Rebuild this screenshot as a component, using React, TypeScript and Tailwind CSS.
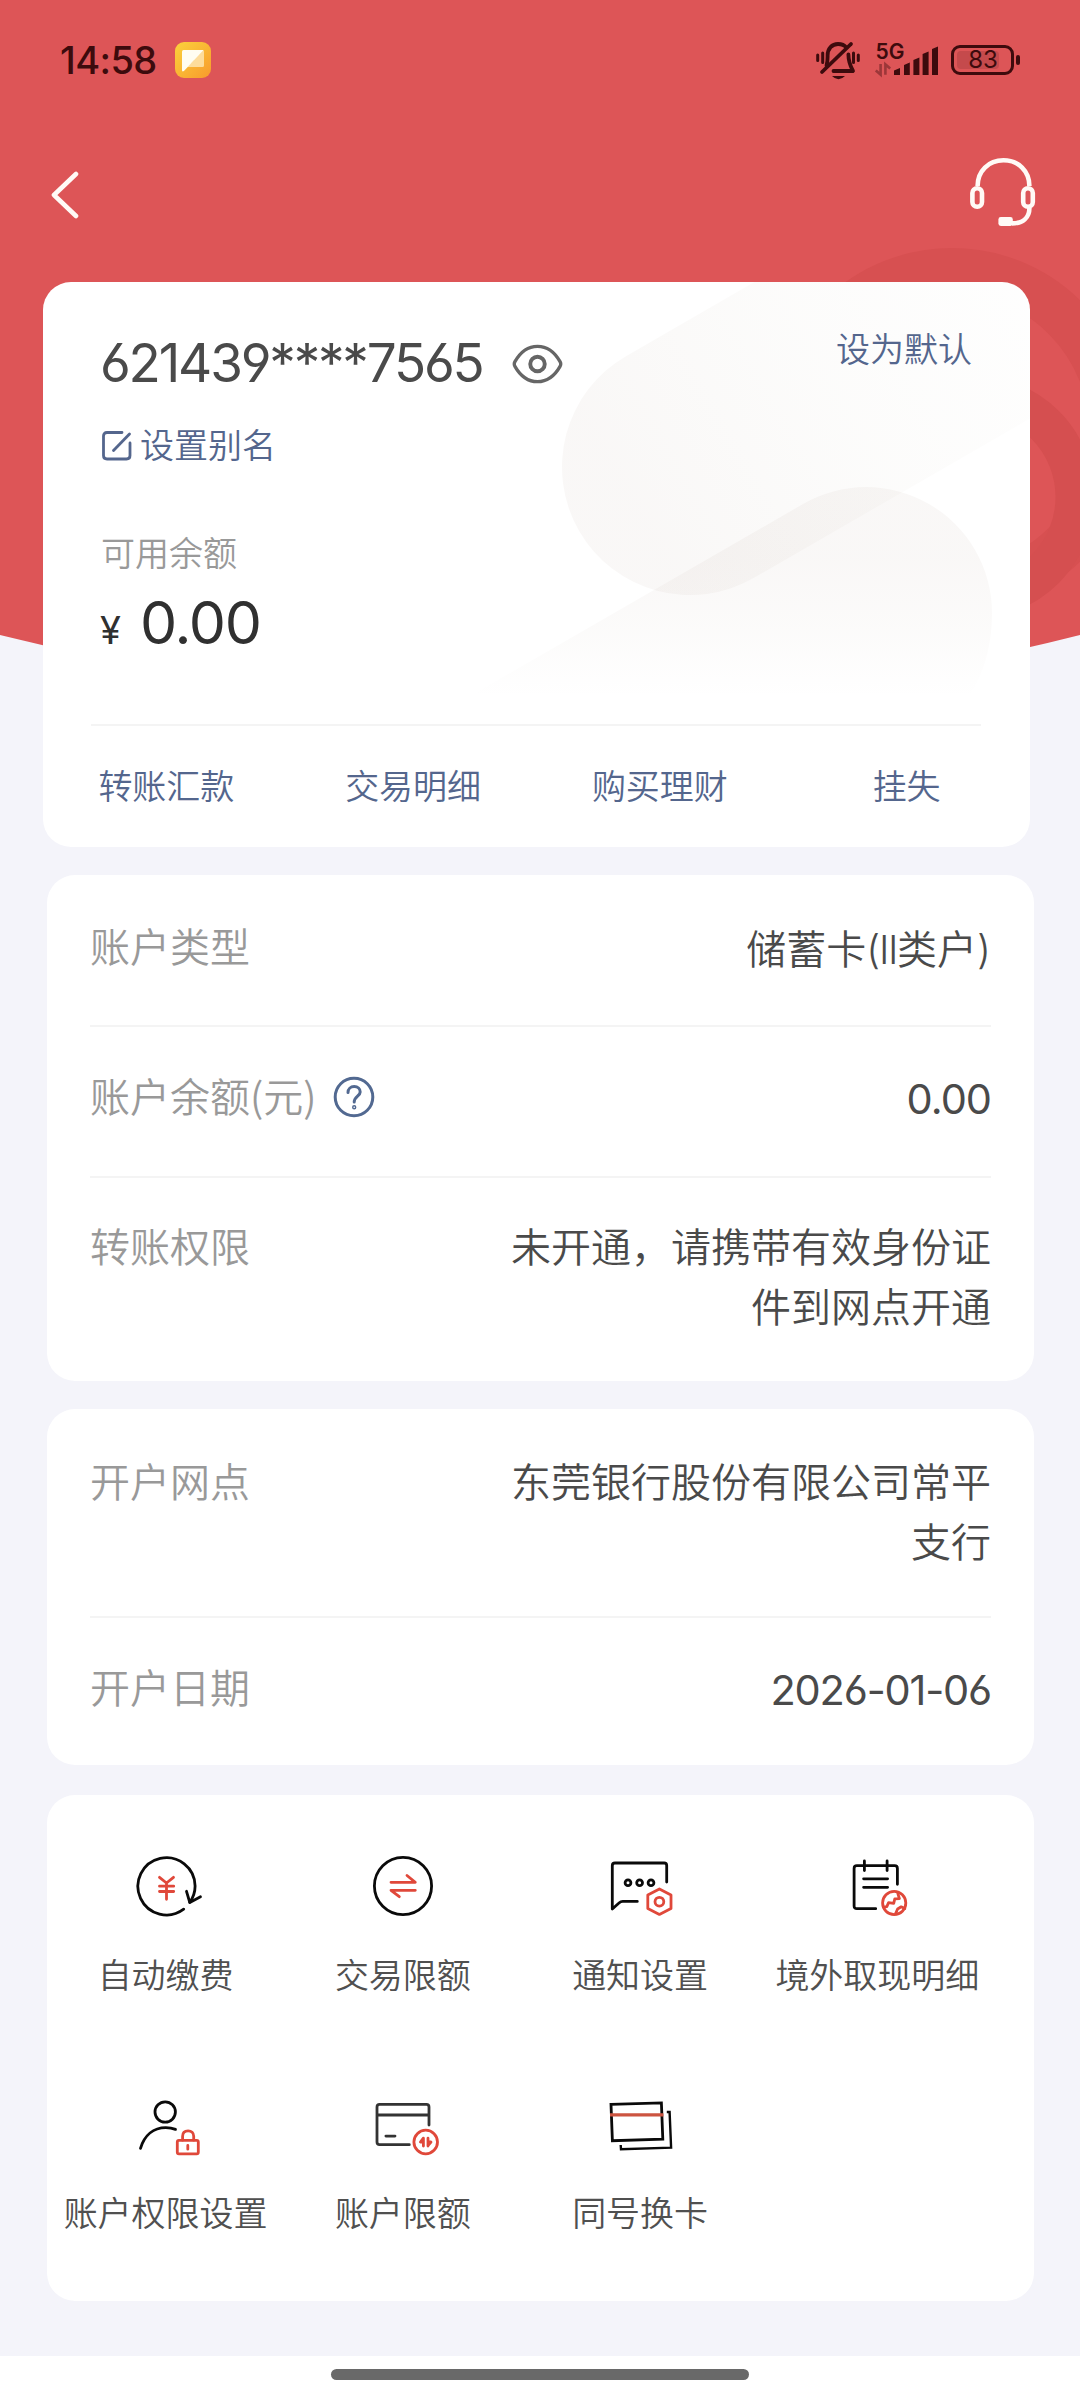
import React from "react";

const RED = "#e0483a";

// Shared frame for the 80x80 service icons
const IconBox = ({
  children,
  stroke = "#0a0a0a",
}: {
  children: React.ReactNode;
  stroke?: string;
}) => (
  <svg
    className="h-20 w-20"
    viewBox="0 0 80 80"
    fill="none"
    stroke={stroke}
    strokeWidth="2.8"
    strokeLinecap="round"
    strokeLinejoin="round"
  >
    {children}
  </svg>
);

const AutoPayIcon = () => (
  <IconBox>
    <path d="M57.7 63.2A28.6 28.6 0 1 1 69.1 40C69.1 46 67.4 51.2 63.8 56.3" />
    <path d="M60.5 45.3L63.8 56.5L74.5 50.8" />
    <g stroke={RED}>
      <path d="M33.5 31.3L40.5 37L47.5 31.3M40.5 37V53.3M33.5 40.2H47.7M33.5 45.5H47.7" />
    </g>
  </IconBox>
);

const TradeLimitIcon = () => (
  <IconBox>
    <circle cx="40" cy="40" r="28.6" />
    <g stroke={RED}>
      <path d="M28 36.3H52.3L44 29.5" />
      <path d="M52.3 44.3H28L36.3 50.7" />
    </g>
  </IconBox>
);

const NoticeIcon = () => (
  <IconBox>
    <path d="M66.7 36V19.5C66.7 18 65.8 17 64.2 17H15C13.3 17 12.3 18 12.3 19.7V63L19 57C20.2 55.9 21.2 55.4 22.8 55.4H37.3" />
    <circle cx="28" cy="36.8" r="2.9" />
    <circle cx="39.6" cy="36.8" r="2.9" />
    <circle cx="51" cy="36.8" r="2.9" />
    <g stroke={RED}>
      <path d="M59.4 43L71 49V62.4L59.4 68.4L47.8 62.4V49Z" />
      <circle cx="59.4" cy="55.7" r="4.4" />
    </g>
  </IconBox>
);

const OverseasIcon = () => (
  <IconBox>
    <g transform="translate(1.4 0)">
      <path d="M37.3 62.7H18.5C16.7 62.7 15.7 61.7 15.7 59.9V22.5C15.7 20.7 16.7 19.7 18.5 19.7H56.2C58 19.7 59 20.7 59 22.5V38.3" />
      <path d="M26 15V24.5M48.7 15V24.5M25.2 32.8H49.2M25.2 41.3H49.2" />
      <g stroke={RED}>
        <circle cx="55.8" cy="57" r="11.6" />
        <path d="M45.4 61.2L48.4 60.6L50.2 56.6L55.3 57.4L56.4 52.8L61 52.6L59.4 47.4" />
        <path d="M57.2 67.6L59.2 63L62.8 60.8L66.4 62.6" />
      </g>
    </g>
  </IconBox>
);

const PermissionIcon = () => (
  <IconBox>
    <circle cx="39.2" cy="28" r="10.2" />
    <path d="M14.5 64.3C18.5 51.5 27.5 43.7 39.8 43.7C43.2 43.7 46.4 44.2 49.5 45.4" />
    <g stroke={RED}>
      <rect x="51.3" y="56.4" width="21" height="13.4" rx="1.6" />
      <path d="M56.6 56.2V52.2C56.6 48.8 58.8 46.8 62.1 46.8C65.4 46.8 67.7 48.8 67.7 52.2V56.2M61.8 61.4V65.2" />
    </g>
  </IconBox>
);

const AccountLimitIcon = () => (
  <IconBox stroke="#333333">
    <path d="M46.3 60.7H16.6C14.9 60.7 14 59.8 14 58.1V23C14 21.3 14.9 20.4 16.6 20.4H63.4C65.1 20.4 66 21.3 66 23V41M14 31H66M22.9 52.1H32" />
    <g stroke={RED}>
      <circle cx="62.7" cy="58" r="11.8" />
      <path d="M60.4 54.2V62M60 54.6L57.4 58H60.2M65 54.2V62M65.2 61.4L68 58H65.2" />
    </g>
  </IconBox>
);

const ChangeCardIcon = () => (
  <svg
    className="h-20 w-20"
    viewBox="0 0 80 80"
    fill="none"
    stroke="#0a0a0a"
    strokeWidth="2.8"
  >
    <path d="M11 20.3L61.4 18.9L62.8 55.2L12.4 56.7Z" />
    <path d="M66.8 28H69.6L71.1 63.6L21 65.2L20.7 61" strokeWidth="2.4" />
    <path d="M10 30.8H63.4" stroke="#cc5440" strokeWidth="3.2" />
  </svg>
);

const services = [
  { label: "自动缴费", icon: <AutoPayIcon /> },
  { label: "交易限额", icon: <TradeLimitIcon /> },
  { label: "通知设置", icon: <NoticeIcon /> },
  { label: "境外取现明细", icon: <OverseasIcon /> },
  { label: "账户权限设置", icon: <PermissionIcon /> },
  { label: "账户限额", icon: <AccountLimitIcon /> },
  { label: "同号换卡", icon: <ChangeCardIcon /> },
];

const quickLinks = ["转账汇款", "交易明细", "购买理财", "挂失"];

// Red header with the ring ornament and curved lower edge
const HeaderBackground = () => (
  <svg
    className="absolute top-0 left-0 h-[720px] w-[1080px]"
    viewBox="0 0 1080 720"
    fill="none"
  >
    <defs>
      <clipPath id="header-shape">
        <path d="M0 0H1080V635Q540 772 0 635Z" />
      </clipPath>
    </defs>
    <g clipPath="url(#header-shape)">
      <rect width="1080" height="720" fill="#dd5557" />
      <circle cx="952" cy="431" r="160" stroke="#d75051" strokeWidth="46" />
      <circle cx="973" cy="497" r="102" stroke="#d54f50" strokeWidth="39" />
    </g>
  </svg>
);

const StatusBar = () => (
  <div className="flex h-[120px] items-center justify-between pr-[60px] pl-[60px]">
    <div className="flex items-center">
      <span className="w-[96px] font-['Inter'] text-[38px] font-medium tracking-[-0.6px] whitespace-nowrap text-[#3d0b0d]">
        14:58
      </span>
      <svg className="ml-[19px] h-9 w-9" viewBox="0 0 36 36">
        <defs>
          <linearGradient id="app-bg" x1="0" y1="0" x2="1" y2="1">
            <stop offset="0" stopColor="#fbd23c" />
            <stop offset="1" stopColor="#f89a2c" />
          </linearGradient>
        </defs>
        <rect width="36" height="36" rx="9" fill="url(#app-bg)" />
        <path d="M8.5 8H27.5Q29 8 29 9.5V23.5Q29 25 27.5 25H12L19 18Z" fill="#fddc9b" />
        <path d="M8.5 8H28.5L9.2 28.8Q7 30.5 7 28V9.5Q7 8 8.5 8Z" fill="#fffdf2" />
      </svg>
    </div>
    <div className="flex items-center text-[#3d0b0d]">
      {/* Muted bell with vibration marks */}
      <svg
        className="h-10 w-[46px]"
        viewBox="0 0 46 40"
        fill="none"
        stroke="currentColor"
        strokeWidth="3.8"
        strokeLinecap="round"
      >
        <path d="M11.5 25.5C12.8 22 12.6 19 12.6 15.5C12.6 8.5 17 4 23 4C26.5 4 29.5 5.2 31.4 7.6" />
        <path d="M33.4 14.5C33.4 21 34.5 24.5 38 31H18.5" strokeLinejoin="round" />
        <path d="M36 4L7 32" />
        <path d="M2.7 15V20.5M7.7 13V22.5M38.5 13V22.5M43.3 15V20.5" strokeWidth="3" />
        <path d="M17 36H30Q27 39.2 23.5 39.2T17 36Z" fill="currentColor" stroke="none" />
      </svg>
      <svg className="ml-[14px] h-10 w-[64px]" viewBox="0 0 64 40" fill="currentColor">
        <text x="0.5" y="19" fontFamily="Inter" fontSize="21" fontWeight="600">
          5G
        </text>
        <path
          d="M5.6 24V34.6L0.8 30.4M10.4 34.8V24.4L15.2 28.6"
          fill="none"
          stroke="currentColor"
          strokeOpacity="0.4"
          strokeWidth="2.6"
        />
        <path d="M19 30.4L25 28V35H19ZM29 25L34.8 22.6V35H29ZM38.4 20L44.4 17.4V35H38.4ZM47.6 14L53.6 11.6V35H47.6ZM57 9L63 6.4V35H57Z" />
      </svg>
      <div className="ml-[12px] flex items-center">
        <div className="flex h-[30px] w-[63px] items-center rounded-[9px] border-[3px] border-current p-[3px]">
          <div className="flex h-full w-[42px] items-center justify-center rounded-[4px] bg-[#3d0b0d]/15 pl-[10px]">
            <span className="font-['Inter'] text-[24px] leading-none font-normal">83</span>
          </div>
        </div>
        <div className="ml-[2px] h-[10px] w-[4px] rounded-full bg-current" />
      </div>
    </div>
  </div>
);

const CardOrnament = () => (
  <svg
    className="absolute inset-0 h-full w-full"
    viewBox="0 0 987 565"
    preserveAspectRatio="none"
  >
    <defs>
      <linearGradient id="pill-top" x1="0" y1="0" x2="1" y2="0">
        <stop offset="0.1" stopColor="#78503c" stopOpacity="0.042" />
        <stop offset="0.5" stopColor="#78643c" stopOpacity="0.02" />
        <stop offset="1" stopColor="#78643c" stopOpacity="0" />
      </linearGradient>
      <linearGradient id="pill-bottom" x1="0" y1="0" x2="0" y2="1">
        <stop offset="0.3" stopColor="#78503c" stopOpacity="0.042" />
        <stop offset="0.6" stopColor="#78503c" stopOpacity="0.024" />
        <stop offset="0.9" stopColor="#78643c" stopOpacity="0" />
      </linearGradient>
    </defs>
    <rect
      x="-128"
      y="-128"
      width="600"
      height="256"
      rx="128"
      fill="url(#pill-top)"
      transform="translate(647 185) rotate(-30)"
    />
    <path d="M760 222A126 126 0 0 1 949 331Q949 372 932 404L912 440H382Z" fill="url(#pill-bottom)" />
  </svg>
);

const InfoRow = ({
  label,
  help,
  multiline,
  children,
}: {
  label: string;
  help?: boolean;
  multiline?: boolean;
  children: React.ReactNode;
}) => (
  <div
    className={`flex justify-between text-[40px] leading-[60px] ${
      multiline ? "h-[120px]" : "h-[60px]"
    }`}
  >
    <div className="-mt-[1px] flex items-center self-start text-[#999999]">
      {label}
      {help && (
        <svg
          className="mt-[4px] ml-[17px] h-[42px] w-[42px]"
          viewBox="0 0 42 42"
          fill="none"
          stroke="#526991"
          strokeWidth="3"
          strokeLinecap="round"
        >
          <circle cx="21" cy="21" r="18.8" />
          <path d="M15 16.5C15 13 17.5 10.6 21.2 10.6C24.8 10.6 27.2 12.9 27.2 16C27.2 20 21.2 20.6 21.2 26" />
          <circle cx="21.2" cy="31.2" r="0.7" />
        </svg>
      )}
    </div>
    <div
      className={`w-[484px] text-right text-[#4a4a4a] ${
        multiline ? "-mt-[1px]" : "mt-[1px]"
      }`}
    >
      {children}
    </div>
  </div>
);

const App = () => {
  return (
    <div className="relative flex h-[2400px] w-[1080px] flex-col overflow-hidden bg-[#f4f4fa] font-['Noto_Sans_CJK_SC',sans-serif] font-[350]">
      <HeaderBackground />

      <div className="relative">
        <StatusBar />
        <div className="flex h-[162px] items-start justify-between pr-[43px] pl-[47px]">
          <svg
            className="mt-[50px] h-[50px] w-8"
            viewBox="0 0 32 50"
            fill="none"
            stroke="#fffaf6"
            strokeWidth="4.6"
            strokeLinecap="round"
            strokeLinejoin="round"
          >
            <path d="M29 4L7 25L29 46" />
          </svg>
          <svg
            className="mt-[37px] h-[70px] w-[67px]"
            viewBox="0 0 67 70"
            fill="none"
            stroke="#fffaf6"
            strokeWidth="4.6"
          >
            <path d="M7.6 29C7.6 14 18.5 3.3 33.5 3.3S59.4 14 59.4 29" />
            <rect x="2.4" y="31.2" width="9.6" height="18.6" rx="4.8" />
            <rect x="53.2" y="31.2" width="9.6" height="18.6" rx="4.8" />
            <path d="M59.4 51C59.4 60.5 53 66.4 42 66.4" />
            <rect x="28.4" y="60" width="14.4" height="9" rx="2.4" fill="#fffaf6" stroke="none" />
          </svg>
        </div>
      </div>

      {/* Card summary */}
      <div className="relative ml-[43px] h-[565px] w-[987px] overflow-hidden rounded-[28px] bg-white">
        <CardOrnament />
        <div className="relative flex h-full flex-col">
          <div className="flex justify-between pt-[46px] pr-[58px] pl-[57px]">
            <div className="flex h-[70px] items-center">
              <span className="mt-[2px] w-[383px] font-['Inter'] text-[53px] font-normal tracking-[-2.2px] whitespace-nowrap text-[#4a4a4a] [font-feature-settings:'cv03','cv04']">
                621439****7565
              </span>
              <svg
                className="mt-[1px] ml-[29px] h-[42px] w-[51px]"
                viewBox="0 0 52 42"
                fill="none"
                stroke="#666666"
                strokeWidth="3.4"
                strokeLinejoin="round"
              >
                <path d="M3 18.6C9 8 16.5 3 26 3S43 8 49 18.6Q50.4 21 49 23.4C43 34 35.5 39 26 39S9 34 3 23.4Q1.6 21 3 18.6Z" />
                <circle cx="26" cy="21" r="7.4" strokeWidth="4" />
              </svg>
            </div>
            <span className="mt-[-5px] text-[34px] leading-[50px] text-[#54668d]">
              设为默认
            </span>
          </div>

          <div className="mt-[21px] flex h-[50px] items-center pl-[58px] text-[#54668d]">
            <svg
              className="mt-[1px] h-[32px] w-[32px]"
              viewBox="0 0 32 32"
              fill="none"
              stroke="currentColor"
              strokeWidth="2.8"
              strokeLinecap="round"
            >
              <path d="M21 3.5H6Q2.5 3.5 2.5 7V26.5Q2.5 30 6 30H25.5Q29 30 29 26.5V14" />
              <path d="M28.5 5L12.5 21.5" />
            </svg>
            <span className="ml-[7px] text-[34px] leading-[50px]">
              设置别名
            </span>
          </div>

          <div className="mt-[58px] pl-[58px] text-[34px] leading-[50px] text-[#999999]">
            可用余额
          </div>
          <div className="mt-[10px] flex h-[72px] items-baseline pl-[57px] font-['Inter'] font-normal text-[#303030]">
            <span className="w-[26px] text-[38px] leading-[72px]">¥</span>
            <span className="ml-[14px] text-[59px] leading-[72px] tracking-[-1.2px]">0.00</span>
          </div>

          <div className="mt-[65px] ml-[48px] h-[2px] w-[890px] bg-[#f4f4f4]" />
          <div className="mt-[34px] grid grid-cols-4 text-center text-[34px] leading-[50px] text-[#54668d]">
            {quickLinks.map((link) => (
              <span key={link}>{link}</span>
            ))}
          </div>
        </div>
      </div>

      {/* Account details */}
      <div className="mt-[28px] ml-[47px] h-[506px] w-[987px] rounded-[28px] bg-white px-[43px] pt-[41px]">
        <InfoRow label="账户类型">
          储蓄卡
          <span className="font-['Inter'] leading-none tracking-[-1.4px]">(II</span>
          类户
          <span className="font-['Inter'] leading-none">)</span>
        </InfoRow>
        <div className="mt-[49px] mb-[39px] h-[2px] bg-[#f4f4f4]" />
        <InfoRow label="账户余额(元)" help>
          <span className="font-['Inter'] text-[41.5px] leading-none font-normal tracking-[-1px]">
            0.00
          </span>
        </InfoRow>
        <div className="mt-[50px] mb-[38px] h-[2px] bg-[#f4f4f4]" />
        <InfoRow label="转账权限" multiline>
          未开通，请携带有效身份证件到网点开通
        </InfoRow>
      </div>

      {/* Opening branch */}
      <div className="mt-[28px] ml-[47px] h-[356px] w-[987px] rounded-[28px] bg-white px-[43px] pt-[42px]">
        <InfoRow label="开户网点" multiline>
          东莞银行股份有限公司常平支行
        </InfoRow>
        <div className="mt-[45px] mb-[39px] h-[2px] bg-[#f4f4f4]" />
        <InfoRow label="开户日期">
          <span className="font-['Inter'] text-[41.5px] leading-none font-normal tracking-[-1.2px] [font-feature-settings:'cv03']">
            2026-01-06
          </span>
        </InfoRow>
      </div>

      {/* Service entries */}
      <div className="mt-[30px] ml-[47px] h-[506px] w-[987px] rounded-[28px] bg-white pt-[51px]">
        <div className="grid w-[949px] grid-cols-4 text-[34px] leading-[50px] text-[#505050]">
          {services.map((item) => (
            <div key={item.label} className="flex h-[238px] flex-col items-center">
              {item.icon}
              <span className="mt-[23px] whitespace-nowrap">{item.label}</span>
            </div>
          ))}
        </div>
      </div>

      <div className="mt-auto flex h-[44px] justify-center bg-white pt-[13px]">
        <div className="h-[11px] w-[418px] rounded-full bg-[#696969]" />
      </div>
    </div>
  );
};

export default App;
